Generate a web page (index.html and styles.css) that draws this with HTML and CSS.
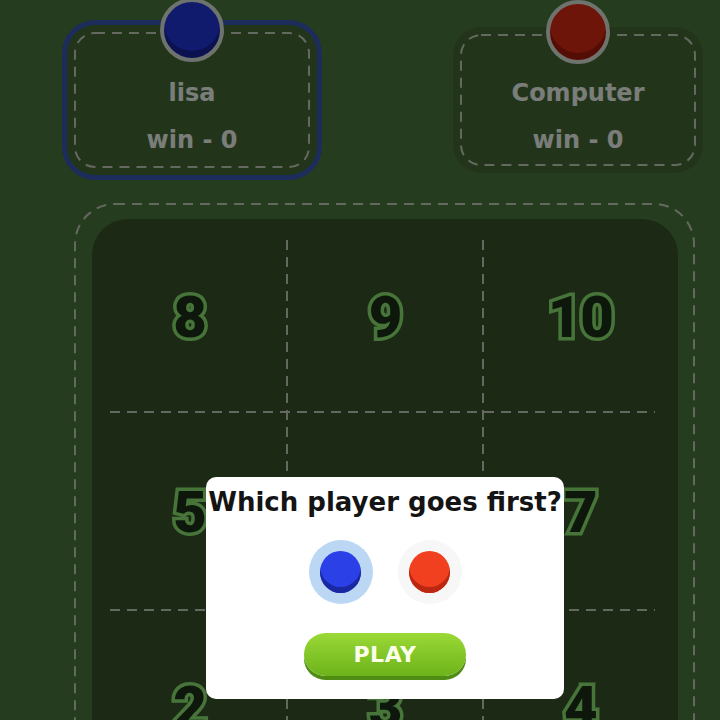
FILE: index.html
```html
<!DOCTYPE html>
<html lang="en">
<head>
<meta charset="utf-8">
<title>Tic Tac Numbers</title>
<link rel="stylesheet" href="styles.css">
</head>
<body>
<main class="screen">
  <header class="players">
    <section class="player player--active">
      <svg class="stitch stitch--card" aria-hidden="true"><rect width="100%" height="100%" rx="20" ry="20"/></svg>
      <span class="puck puck--blue"></span>
      <p class="player-name">lisa</p>
      <p class="player-score">win - 0</p>
    </section>
    <section class="player">
      <svg class="stitch stitch--card" aria-hidden="true"><rect width="100%" height="100%" rx="20" ry="20"/></svg>
      <span class="puck puck--red"></span>
      <p class="player-name">Computer</p>
      <p class="player-score">win - 0</p>
    </section>
  </header>

  <section class="table">
    <svg class="stitch stitch--table" aria-hidden="true"><rect width="100%" height="100%" rx="40" ry="40"/></svg>
    <div class="board">
      <svg class="board-lines" width="586" height="600" aria-hidden="true">
        <line x1="195" y1="21" x2="195" y2="600"/>
        <line x1="391" y1="21" x2="391" y2="600"/>
        <line x1="18" y1="193" x2="563" y2="193"/>
        <line x1="18" y1="391" x2="563" y2="391"/>
      </svg>
      <div class="cell"><span class="num">8</span></div>
      <div class="cell"><span class="num">9</span></div>
      <div class="cell"><span class="num">10</span></div>
      <div class="cell"><span class="num">5</span></div>
      <div class="cell"><span class="num">6</span></div>
      <div class="cell"><span class="num">7</span></div>
      <div class="cell"><span class="num">2</span></div>
      <div class="cell"><span class="num">3</span></div>
      <div class="cell"><span class="num">4</span></div>
    </div>
  </section>

  <div class="dim"></div>

  <div class="dialog" role="dialog">
    <h2 class="dialog-title">Which player goes first?</h2>
    <div class="choices">
      <button class="choice choice--selected"><span class="disc disc--blue"></span></button>
      <button class="choice"><span class="disc disc--red"></span></button>
    </div>
    <button class="play">PLAY</button>
  </div>
</main>
</body>
</html>
```

FILE: styles.css
```css
* { box-sizing: border-box; }

html, body {
  margin: 0;
  padding: 0;
}

body {
  background: #263c1f;
  font-family: "DejaVu Sans", sans-serif;
}

.screen {
  position: relative;
  width: 720px;
  height: 720px;
  overflow: hidden;
  background: #4c783e;
}

/* ---- player cards ---- */
.players {
  display: flex;
  align-items: center;
  gap: 136px;
  height: 175px;
  padding: 25px 0 0 67px;
}

.player {
  position: relative;
  width: 250px;
  height: 146px;
  border-radius: 28px;
  background: #446a36;
  display: flex;
  flex-direction: column;
  align-items: center;
  padding-top: 51px;
  gap: 17px;
}

.player--active {
  height: 150px;
  padding-top: 53px;
  box-shadow: 0 0 0 5px #385ab8;
}

.player-name,
.player-score {
  position: relative;
  margin: 0;
  font-weight: 700;
  font-size: 24px;
  line-height: 30px;
  color: #f4fbf2;
}

.stitch {
  position: absolute;
  overflow: visible;
  fill: none;
  stroke: #c8d2be;
  stroke-width: 2;
  stroke-dasharray: 10 7;
}

.stitch--card {
  inset: 8px;
  width: calc(100% - 16px);
  height: calc(100% - 16px);
}

.puck {
  position: absolute;
  top: -27px;
  left: calc(50% - 32px);
  width: 64px;
  height: 64px;
  border-radius: 50%;
  border: 4px solid #dfe6dc;
}

.puck--blue {
  background: #2236da;
  box-shadow: inset 0 -7px 0 #17259e;
}

.puck--red {
  background: #dc2a12;
  box-shadow: inset 0 -7px 0 #a81a0a;
}

/* ---- board ---- */
.table {
  position: relative;
  margin: 28px 0 0 74px;
  width: 621px;
  height: 600px;
  padding: 16px 17px 0 18px;
}

.stitch--table {
  inset: 1px;
  width: calc(100% - 2px);
  height: calc(100% - 2px);
}

.board {
  position: relative;
  width: 586px;
  height: 600px;
  border-radius: 36px;
  background: #36522a;
  display: grid;
  grid-template-columns: repeat(3, 1fr);
  grid-template-rows: repeat(3, 195px);
}

.board-lines {
  position: absolute;
  left: 0;
  top: 0;
  stroke: #c8d2be;
  stroke-width: 2;
  stroke-dasharray: 10 7;
}

.cell {
  display: flex;
  align-items: center;
  justify-content: center;
}

.num {
  position: relative;
  font-family: Roboto, "Liberation Sans", sans-serif;
  font-weight: 900;
  font-size: 58px;
  line-height: 1;
  letter-spacing: -1px;
  color: #1c2e16;
  -webkit-text-stroke: 7px #8eea72;
  paint-order: stroke fill;
}

/* ---- modal ---- */
.dim {
  position: absolute;
  inset: 0;
  background: rgba(0, 0, 0, 0.5);
}

.dialog {
  position: absolute;
  left: 206px;
  top: 477px;
  width: 358px;
  height: 222px;
  background: #ffffff;
  border-radius: 10px;
  display: flex;
  flex-direction: column;
  align-items: center;
  padding-top: 10px;
}

.dialog-title {
  margin: 0;
  font-weight: 700;
  font-size: 26px;
  line-height: 30px;
  color: #141414;
  white-space: nowrap;
}

.choices {
  display: flex;
  gap: 25px;
  margin-top: 23px;
}

.choice {
  width: 64px;
  height: 64px;
  padding: 0;
  border: 0;
  border-radius: 50%;
  background: #f7f7f7;
  display: flex;
  align-items: center;
  justify-content: center;
}

.choice--selected {
  background: #bcd7f4;
}

.disc {
  width: 41px;
  height: 42px;
  border-radius: 50%;
}

.disc--blue {
  background: #2b40e6;
  box-shadow: inset 0 -6px 0 #1a29a2;
}

.disc--red {
  background: #f0401f;
  box-shadow: inset 0 -6px 0 #bb2710;
}

.play {
  margin-top: 29px;
  width: 162px;
  height: 43px;
  border: 0;
  border-radius: 22px;
  background: linear-gradient(#9ad936, #6db31b);
  box-shadow: 0 4px 0 #4f8c13;
  color: #fbffea;
  font-family: "DejaVu Sans", sans-serif;
  font-weight: 700;
  font-size: 22px;
  letter-spacing: 0.5px;
  padding: 0;
}
```
